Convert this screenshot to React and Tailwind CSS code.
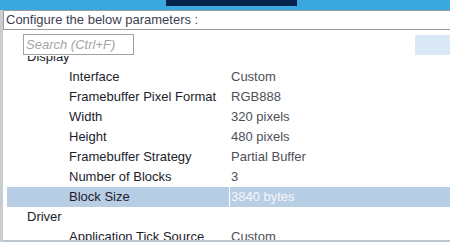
import React from "react";

const rows = [
  { label: "Display", group: true },
  { label: "Interface", value: "Custom" },
  { label: "Framebuffer Pixel Format", value: "RGB888" },
  { label: "Width", value: "320 pixels" },
  { label: "Height", value: "480 pixels" },
  { label: "Framebuffer Strategy", value: "Partial Buffer" },
  { label: "Number of Blocks", value: "3" },
  { label: "Block Size", value: "3840 bytes", selected: true },
  { label: "Driver", group: true },
  { label: "Application Tick Source", value: "Custom" },
];

const Row = ({ row }) => {
  if (row.group) {
    return (
      <div className="h-[20px] leading-[20px] pl-[20px] text-[#1c1c2c] whitespace-nowrap">
        {row.label}
      </div>
    );
  }
  return (
    <div
      className={
        row.selected
          ? "flex h-[20px] leading-[20px] bg-[#b8cee5] whitespace-nowrap"
          : "flex h-[20px] leading-[20px] whitespace-nowrap"
      }
    >
      <div className="w-[222px] shrink-0 pl-[62px] text-[#1c1c2c]">{row.label}</div>
      <div
        className={
          row.selected
            ? "flex-1 border-l border-white pl-[1px] text-[#f4f7fb]"
            : "flex-1 border-l border-transparent pl-[1px] text-[#4e4e58]"
        }
      >
        {row.value}
      </div>
    </div>
  );
};

const App = () => {
  return (
    <div className="w-[450px] h-[242px] overflow-hidden bg-white flex flex-col font-['Liberation_Sans',Arial,sans-serif] text-[13px]">
      {/* top tab strip */}
      <div className="h-[10px] shrink-0 bg-[#38a8de]">
        <div className="ml-[166px] w-[131px] h-[6px] bg-[#04224a]"></div>
      </div>

      <div className="flex flex-1 min-h-0">
        <div className="w-[3px] shrink-0 bg-[#c8cdd2]"></div>

        <div className="flex-1 flex flex-col min-w-0">
          {/* header */}
          <div className="h-[20px] shrink-0 border-y border-l border-[#9c9c9c] pl-[2px] leading-[18px] text-[#3e3e54] whitespace-nowrap">
            Configure the below parameters :
          </div>

          {/* search */}
          <div className="h-[26px] shrink-0 flex items-start">
            <div className="ml-[20px] mt-[4px] w-[111px] h-[21px] border border-[#a2a2a2] pl-[2px] leading-[19px] italic text-[#a6a6a6] whitespace-nowrap">
              Search (Ctrl+F)
            </div>
            <div className="ml-auto mt-[5px] w-[35px] h-[20px] bg-[#dbe8f5]"></div>
          </div>

          {/* tree */}
          <div className="flex-1 min-h-0 overflow-hidden pl-[4px]">
            <div className="-mt-[9px]">
              {rows.map((row) => (
                <Row key={row.label} row={row} />
              ))}
            </div>
          </div>

          <div className="h-[2px] shrink-0 bg-[#bcc6ce]"></div>
        </div>
      </div>
    </div>
  );
};

export default App;
